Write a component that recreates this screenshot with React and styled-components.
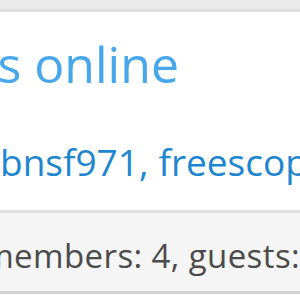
import React from 'react';
import styled, { createGlobalStyle } from 'styled-components';

const GlobalStyle = createGlobalStyle`
  html, body {
    margin: 0;
    padding: 0;
    background: #fff;
    overflow: hidden;
  }
  body {
    font-family: 'Open Sans', 'Noto Sans', sans-serif;
  }
`;

const Page = styled.div`
  width: 300px;
  height: 300px;
  overflow: hidden;
  display: flex;
  flex-direction: column;
`;

const PrevFooter = styled.div`
  height: 9px;
  background: #ebebeb;
  border-bottom: 3px solid #dfdfdf;
`;

const Body = styled.div`
  height: 198px;
  box-sizing: border-box;
  padding: 22px 0 0;
  background: #fff;
  display: flex;
  flex-direction: column;
  gap: 46px;
`;

const Heading = styled.h3`
  margin: 0;
  text-indent: ${(p) => p.$shift}px;
  font-size: 50px;
  line-height: 60px;
  font-weight: 400;
  color: #47a7eb;
  white-space: nowrap;
`;

const UserList = styled.ul`
  list-style: none;
  margin: 0 0 0 ${(p) => p.$shift}px;
  padding: 0;
  display: flex;
  font-size: 37px;
  line-height: 44px;
  white-space: nowrap;
`;

const User = styled.li`
  color: #1d86cf;
  &:not(:last-child)::after {
    content: ',';
    margin-right: 10px;
  }
`;

const Footer = styled.div`
  height: 84px;
  box-sizing: border-box;
  padding-top: 23px;
  text-indent: ${(p) => p.$shift}px;
  background: #f5f5f5;
  border-top: 3px solid #dfdfdf;
  border-bottom: 3px solid #d2d2d2;
  font-size: 33px;
  line-height: 40px;
  letter-spacing: 0.4px;
  color: #4b4b4b;
  white-space: nowrap;
`;

const users = ['bnsf971', 'freescope', 'railfan', 'admin'];

export default function App() {
  return (
    <Page>
      <GlobalStyle />
      <PrevFooter />
      <Body>
        <Heading $shift={-201}>Members online</Heading>
        <UserList $shift={0}>
          {users.map((u) => (
            <User key={u}>{u}</User>
          ))}
        </UserList>
      </Body>
      <Footer $shift={-171}>Total: 10 (members: 4, guests: 6)</Footer>
    </Page>
  );
}
